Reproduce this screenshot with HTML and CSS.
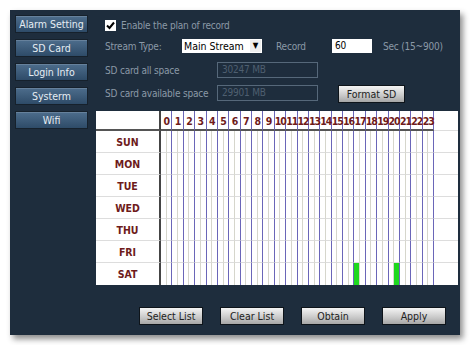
FILE: index.html
```html
<!DOCTYPE html>
<html lang="en">
<head>
  <meta charset="UTF-8">
  <title>SD Card Record Plan</title>
  <link rel="stylesheet" href="styles.css">
</head>
<body>
  <div class="panel">
    <div class="side">
      <div class="side-btn">Alarm Setting</div>
      <div class="side-btn">SD Card</div>
      <div class="side-btn">Login Info</div>
      <div class="side-btn">Systerm</div>
      <div class="side-btn">Wifi</div>
    </div>

    <div class="main">
      <div class="opts">
        <div class="row row-check">
          <span class="check"><svg width="9" height="9" viewBox="0 0 9 9"><path d="M1 4.5 L3.5 7 L8 1.5" fill="none" stroke="#000" stroke-width="2"/></svg></span>
          <span>Enable the plan of record</span>
        </div>
        <div class="row row-stream">
          <span class="lbl lbl-stream">Stream Type:</span>
          <span class="select">Main Stream<span class="arrow">&#9660;</span></span>
          <span class="lbl lbl-record">Record</span>
          <span class="num">60</span>
          <span>Sec (15~900)</span>
        </div>
        <div class="row row-space">
          <span class="lbl lbl-space">SD card all space</span>
          <span class="ro">30247 MB</span>
        </div>
        <div class="row row-space">
          <span class="lbl lbl-space">SD card available space</span>
          <span class="ro">29901 MB</span>
          <span class="btn btn-format">Format SD</span>
        </div>
      </div>

      <div class="sched" id="sched"></div>

      <div class="actions">
        <span class="btn">Select List</span>
        <span class="btn">Clear List</span>
        <span class="btn">Obtain</span>
        <span class="btn">Apply</span>
      </div>
    </div>
  </div>

  <script>
    // build the week x 24h record grid
    (function() {
      var days = ['SUN', 'MON', 'TUE', 'WED', 'THU', 'FRI', 'SAT'];
      // half-hour slots that are switched on, per day
      var on = { SAT: [34, 41] };
      var grid = document.getElementById('sched');
      var html = '<div class="corner"></div>';
      for (var h = 0; h < 24; h++) {
        html += '<div class="hour">' + h + '</div>';
      }
      html += '<div class="tail head-tail"></div>';
      days.forEach(function(d) {
        html += '<div class="day">' + d + '</div>';
        for (var s = 0; s < 48; s++) {
          var cls = 'slot' + (s % 2 ? ' half' : '');
          if (on[d] && on[d].indexOf(s) > -1) cls += ' on';
          html += '<div class="' + cls + '"></div>';
        }
        html += '<div class="tail"></div>';
      });
      grid.innerHTML = html;
    })();
  </script>
</body>
</html>
```

FILE: styles.css
```css
body {
  margin: 0;
  background: #fff;
  font-family: "DejaVu Sans Condensed", "DejaVu Sans", sans-serif;
  font-size: 10.5px;
}

.panel {
  margin: 10px;
  width: 450px;
  height: 325px;
  background: #1e2d3d;
  display: flex;
  box-shadow: 3px 4px 6px rgba(0, 0, 0, 0.45);
}

/* left menu */
.side {
  padding: 5px 0 0 5px;
  width: 73px;
  display: flex;
  flex-direction: column;
  gap: 6px;
}

.side-btn {
  height: 18px;
  line-height: 17px;
  text-align: center;
  color: #e6edf3;
  white-space: nowrap;
  background: linear-gradient(#4d6d8c, #2e4b68);
  border: 1px solid #16212c;
  box-sizing: border-box;
  box-shadow: inset 0 1px 0 rgba(255, 255, 255, 0.15);
}

.main {
  margin-left: 8px;
  width: 362px;
  display: flex;
  flex-direction: column;
}

/* options block */
.opts {
  padding: 8px 0 0 9px;
  color: #8b99a7;
  white-space: nowrap;
  font-size: 10px;
  letter-spacing: -0.2px;
}

.row {
  display: flex;
  align-items: center;
}

.row-check {
  height: 14px;
}

.check {
  width: 11px;
  height: 11px;
  background: #fff;
  margin-right: 5px;
  display: flex;
  align-items: center;
  justify-content: center;
}

.row-stream {
  height: 14px;
  margin-top: 7px;
}

.lbl-stream {
  width: 77px;
}

.select {
  width: 80px;
  height: 14px;
  background: #fff;
  color: #000;
  box-sizing: border-box;
  padding-left: 2px;
  line-height: 14px;
  font-size: 10.5px;
  letter-spacing: 0;
  position: relative;
}

.arrow {
  position: absolute;
  right: 1px;
  top: 1px;
  width: 11px;
  height: 12px;
  font-size: 8px;
  line-height: 12px;
  text-align: center;
  background: #eee;
}

.lbl-record {
  margin-left: 14px;
  width: 56px;
}

.num {
  width: 40px;
  height: 14px;
  line-height: 14px;
  background: #fff;
  color: #000;
  padding-left: 3px;
  box-sizing: border-box;
  margin-right: 11px;
}

.row-space {
  height: 16px;
  margin-top: 9px;
}

.row-space + .row-space {
  margin-top: 7px;
}

.lbl-space {
  width: 112px;
}

.ro {
  width: 101px;
  height: 16px;
  line-height: 14px;
  border: 1px solid #56687a;
  box-sizing: border-box;
  padding-left: 4px;
  color: #4e5f70;
}

.btn {
  display: inline-block;
  width: 64px;
  height: 18px;
  line-height: 16px;
  text-align: center;
  color: #222;
  font-size: 10.5px;
  letter-spacing: 0;
  background: linear-gradient(#f4f4f4, #c8c8c8 60%, #a6a6a6);
  border: 1px solid #0e141a;
  box-sizing: border-box;
}

.btn-format {
  width: 67px;
  margin-left: 20px;
  margin-top: 2px;
}

/* schedule grid */
.sched {
  margin-top: 10px;
  height: 174px;
  background: #fff;
  display: grid;
  grid-template-columns: 65px repeat(48, 1fr) 24px;
  grid-template-rows: 20px repeat(7, 22px);
}

.corner {
  border-bottom: 2px solid #555;
  border-right: 2px solid #444;
}

.hour {
  grid-column: span 2;
  border-bottom: 2px solid #555;
  border-right: 1px solid #6a66b8;
  color: #6e1b1b;
  font-weight: bold;
  font-size: 10.5px;
  letter-spacing: -1px;
  line-height: 20px;
  text-align: center;
  white-space: nowrap;
  overflow: visible;
}

.head-tail {
  border-bottom: 2px solid #555;
}

.day {
  color: #6e1b1b;
  font-weight: bold;
  text-align: center;
  line-height: 22px;
  border-right: 2px solid #444;
  border-bottom: 1px solid #ddd;
}

.slot {
  border-right: 1px solid #d6d6cc;
  border-bottom: 1px solid #ddd;
}

.slot.half {
  border-right-color: #6a66b8;
}

.slot.on {
  background: #1ed81e;
}

.sched > div:nth-last-child(-n+50) {
  border-bottom: none;
}

.tail {
  border-bottom: 1px solid #ddd;
}

.actions {
  margin-top: 22px;
  padding-left: 43px;
  display: flex;
  gap: 17px;
}
```
